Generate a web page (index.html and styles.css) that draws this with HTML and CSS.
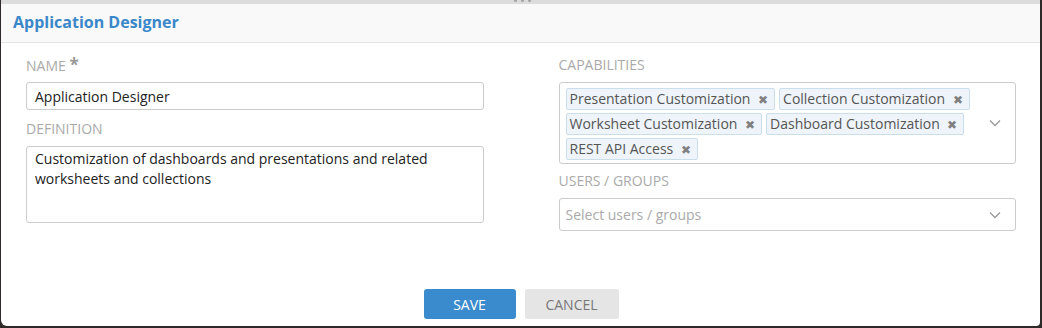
FILE: index.html
```html
<!DOCTYPE html>
<html lang="en">
<head>
    <meta charset="UTF-8">
    <title>Application Designer</title>
    <link rel="stylesheet" href="styles.css">
</head>
<body>
    <div class="modal">
        <div class="grip"><span></span><span></span><span></span></div>
        <div class="header">
            <h1>Application Designer</h1>
        </div>
        <div class="content">
            <div class="column">
                <label class="field-label">Name <span class="required">*</span></label>
                <div class="text-input">Application Designer</div>
                <label class="field-label">Definition</label>
                <div class="text-area">Customization of dashboards and presentations and related worksheets and collections</div>
            </div>
            <div class="column">
                <label class="field-label">Capabilities</label>
                <div class="multi-select">
                    <div class="tags">
                        <span class="tag">Presentation Customization <i class="remove">&#x2716;</i></span>
                        <span class="tag">Collection Customization <i class="remove">&#x2716;</i></span>
                        <span class="tag">Worksheet Customization <i class="remove">&#x2716;</i></span>
                        <span class="tag">Dashboard Customization <i class="remove">&#x2716;</i></span>
                        <span class="tag">REST API Access <i class="remove">&#x2716;</i></span>
                    </div>
                    <svg class="chevron" width="12" height="8" viewBox="0 0 12 8"><path d="M1 1.5 L6 6.5 L11 1.5" fill="none" stroke="#999" stroke-width="1.3"/></svg>
                </div>
                <label class="field-label">Users / Groups</label>
                <div class="select">
                    <span class="placeholder">Select users / groups</span>
                    <svg class="chevron" width="12" height="8" viewBox="0 0 12 8"><path d="M1 1.5 L6 6.5 L11 1.5" fill="none" stroke="#999" stroke-width="1.3"/></svg>
                </div>
            </div>
        </div>
        <div class="footer">
            <button class="btn btn-save">Save</button>
            <button class="btn btn-cancel">Cancel</button>
        </div>
    </div>
</body>
</html>
```

FILE: styles.css
```css
* {
    margin: 0;
    padding: 0;
    box-sizing: border-box;
    font-family: 'Open Sans', 'Liberation Sans', sans-serif;
}
body {
    background-color: #2e2a29;
    width: 1042px;
    height: 328px;
    overflow: hidden;
}
.modal {
    background-color: #fff;
    height: 326px;
    margin: 0 2px 0 1px;
    border-bottom-left-radius: 6px;
    border-bottom-right-radius: 4px;
    display: flex;
    flex-direction: column;
}
.grip {
    height: 4px;
    background-color: #dcdcdc;
    display: flex;
    justify-content: center;
    gap: 4px;
    padding-left: 4px;
}
.grip span {
    width: 3px;
    height: 2px;
    background-color: #a6a6a6;
    border-radius: 0 0 2px 2px;
}
.header {
    background-color: #f9f9f9;
    border-bottom: 1px solid #e3e3e3;
    height: 39px;
    padding: 7px 12px 0;
}
.header h1 {
    font-size: 16px;
    font-weight: 700;
    color: #3a87c9;
    letter-spacing: 0;
}
.content {
    display: flex;
    gap: 75px;
    padding: 13px 24px 0 25px;
    flex: 1;
}
.column {
    flex: 1;
    display: flex;
    flex-direction: column;
}
.field-label {
    display: block;
    font-size: 14px;
    color: #aaa;
    text-transform: uppercase;
    height: 26px;
    line-height: 18px;
}
.required {
    color: #999;
    font-size: 17px;
    font-weight: 700;
}
.text-input {
    height: 28px;
    border: 1px solid #ccc;
    border-radius: 3px;
    padding: 4px 8px;
    font-size: 14px;
    line-height: 19px;
    color: #222;
    margin-bottom: 10px;
}
.text-area {
    height: 77px;
    border: 1px solid #ccc;
    border-radius: 3px;
    padding: 2px 8px;
    font-size: 14px;
    line-height: 20px;
    color: #222;
}
.multi-select {
    border: 1px solid #ccc;
    border-radius: 3px;
    height: 82px;
    padding: 5px 6px;
    display: flex;
    align-items: center;
    margin-bottom: 8px;
}
.tags {
    flex: 1;
    display: flex;
    flex-wrap: wrap;
    gap: 3px 4px;
    align-self: flex-start;
}
.tag {
    background-color: #eef4fa;
    border: 1px solid #cbdeec;
    border-radius: 2px;
    height: 22px;
    padding: 0 6px 0 3px;
    font-size: 14px;
    line-height: 20px;
    color: #555;
    white-space: nowrap;
}
.remove {
    font-style: normal;
    font-size: 12px;
    color: #808080;
    margin-left: 4px;
}
.chevron {
    margin: 0 8px 0 10px;
}
.select {
    border: 1px solid #ccc;
    border-radius: 3px;
    height: 33px;
    padding: 0 6px;
    display: flex;
    align-items: center;
    justify-content: space-between;
}
.placeholder {
    font-size: 14px;
    color: #aaa;
}
.footer {
    display: flex;
    justify-content: center;
    gap: 9px;
    padding: 0 0 7px 1px;
}
.btn {
    width: 92px;
    height: 30px;
    border: none;
    border-radius: 3px;
    font-size: 14px;
    text-transform: uppercase;
    cursor: pointer;
}
.btn-save {
    background-color: #3a8bcd;
    color: #fff;
}
.btn-cancel {
    background-color: #e5e5e5;
    color: #777;
    width: 94px;
}
```
